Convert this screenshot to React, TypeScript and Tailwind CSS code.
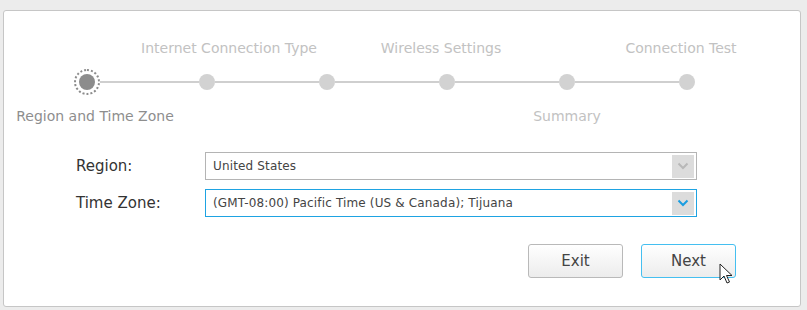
const font = { fontFamily: '"DejaVu Sans", Verdana, sans-serif' };

function Chevron({ color }: { color: string }) {
  return (
    <svg width="12" height="8" viewBox="0 0 12 8">
      <path d="M1.5 1.5 L6 6 L10.5 1.5" fill="none" stroke={color} strokeWidth="2" />
    </svg>
  );
}

function Select({ value, active }: { value: string; active?: boolean }) {
  return (
    <div
      className={`flex h-[28px] w-[492px] items-center justify-between border bg-white pl-[7px] pr-[2px] ${
        active ? 'border-[#1ea3e2]' : 'border-[#b4b4b4]'
      }`}
    >
      <span className="text-[12px] tracking-[0.15px] text-[#444]">{value}</span>
      <span className="flex h-[23px] w-[22px] items-center justify-center bg-[#dcdcdc]">
        <Chevron color={active ? '#1a9de0' : '#b8b8b8'} />
      </span>
    </div>
  );
}

function Cursor() {
  return (
    <svg
      className="absolute left-[77px] top-[18px]"
      width="16"
      height="23"
      viewBox="0 0 16 23"
    >
      <path
        d="M1 1 L1 17 L5 13 L8 20 L10.5 19 L7.5 12.5 L13 12.5 Z"
        fill="#fff"
        stroke="#222"
        strokeWidth="1"
        strokeLinejoin="round"
      />
    </svg>
  );
}

export default function App() {
  const dots = [1, 2, 3, 4, 5];
  return (
    <div className="h-[310px] w-[807px] bg-[#ececec] pt-[10px] pl-[3px]" style={font}>
      <div className="h-[297px] w-[798px] rounded-[3px] border border-[#c6c6c6] bg-white pt-[28px]">
        {/* top labels */}
        <div className="ml-[23px] grid h-[18px] grid-cols-[repeat(6,120px)] text-[14px] leading-[18px] text-[#c2c2c2]">
          <div />
          <div className="flex justify-center whitespace-nowrap translate-x-[22px]">Internet Connection Type</div>
          <div />
          <div className="flex justify-center whitespace-nowrap -translate-x-[6px]">Wireless Settings</div>
          <div />
          <div className="flex justify-center whitespace-nowrap -translate-x-[6px]">Connection Test</div>
        </div>

        {/* dots */}
        <div className="ml-[70px] mt-[12px] flex h-[26px] items-center">
          <div className="flex h-[26px] w-[26px] items-center justify-center rounded-full border-2 border-dotted border-[#8c8c8c]">
            <div className="h-[16px] w-[16px] rounded-full bg-[#8c8c8c]" />
          </div>
          {dots.map((i) => (
            <div key={i} className="flex items-center">
              <div className={`h-[2px] bg-[#cfcfcf] ${i === 1 ? 'w-[99px]' : 'w-[104px]'}`} />
              <div className="h-[16px] w-[16px] rounded-full bg-[#d2d2d2]" />
            </div>
          ))}
        </div>

        {/* bottom labels */}
        <div className="ml-[23px] mt-[12px] grid h-[18px] grid-cols-[repeat(6,120px)] text-[14px] leading-[18px] text-[#c2c2c2]">
          <div className="flex justify-center whitespace-nowrap text-[#8e8e8e] translate-x-[8px]">Region and Time Zone</div>
          <div />
          <div />
          <div />
          <div className="flex justify-center whitespace-nowrap">Summary</div>
          <div />
        </div>

        {/* form */}
        <div className="mt-[27px] flex flex-col gap-[9px] pl-[72px]">
          <div className="flex items-center">
            <span className="w-[129px] text-[15px] text-[#333]">Region:</span>
            <Select value="United States" />
          </div>
          <div className="flex items-center">
            <span className="w-[129px] text-[15px] text-[#333]">Time Zone:</span>
            <Select value="(GMT-08:00) Pacific Time (US & Canada); Tijuana" active />
          </div>
        </div>

        {/* buttons */}
        <div className="mt-[27px] flex justify-end gap-[18px] pr-[64px]">
          <button className="h-[34px] w-[95px] rounded-[3px] border border-[#b9b9b9] bg-gradient-to-b from-white to-[#ececec] text-[15px] text-[#444]">
            Exit
          </button>
          <button className="relative h-[34px] w-[95px] rounded-[3px] border border-[#45bff0] bg-gradient-to-b from-white to-[#ececec] text-[15px] text-[#444]">
            Next
            <Cursor />
          </button>
        </div>
      </div>
    </div>
  );
}
